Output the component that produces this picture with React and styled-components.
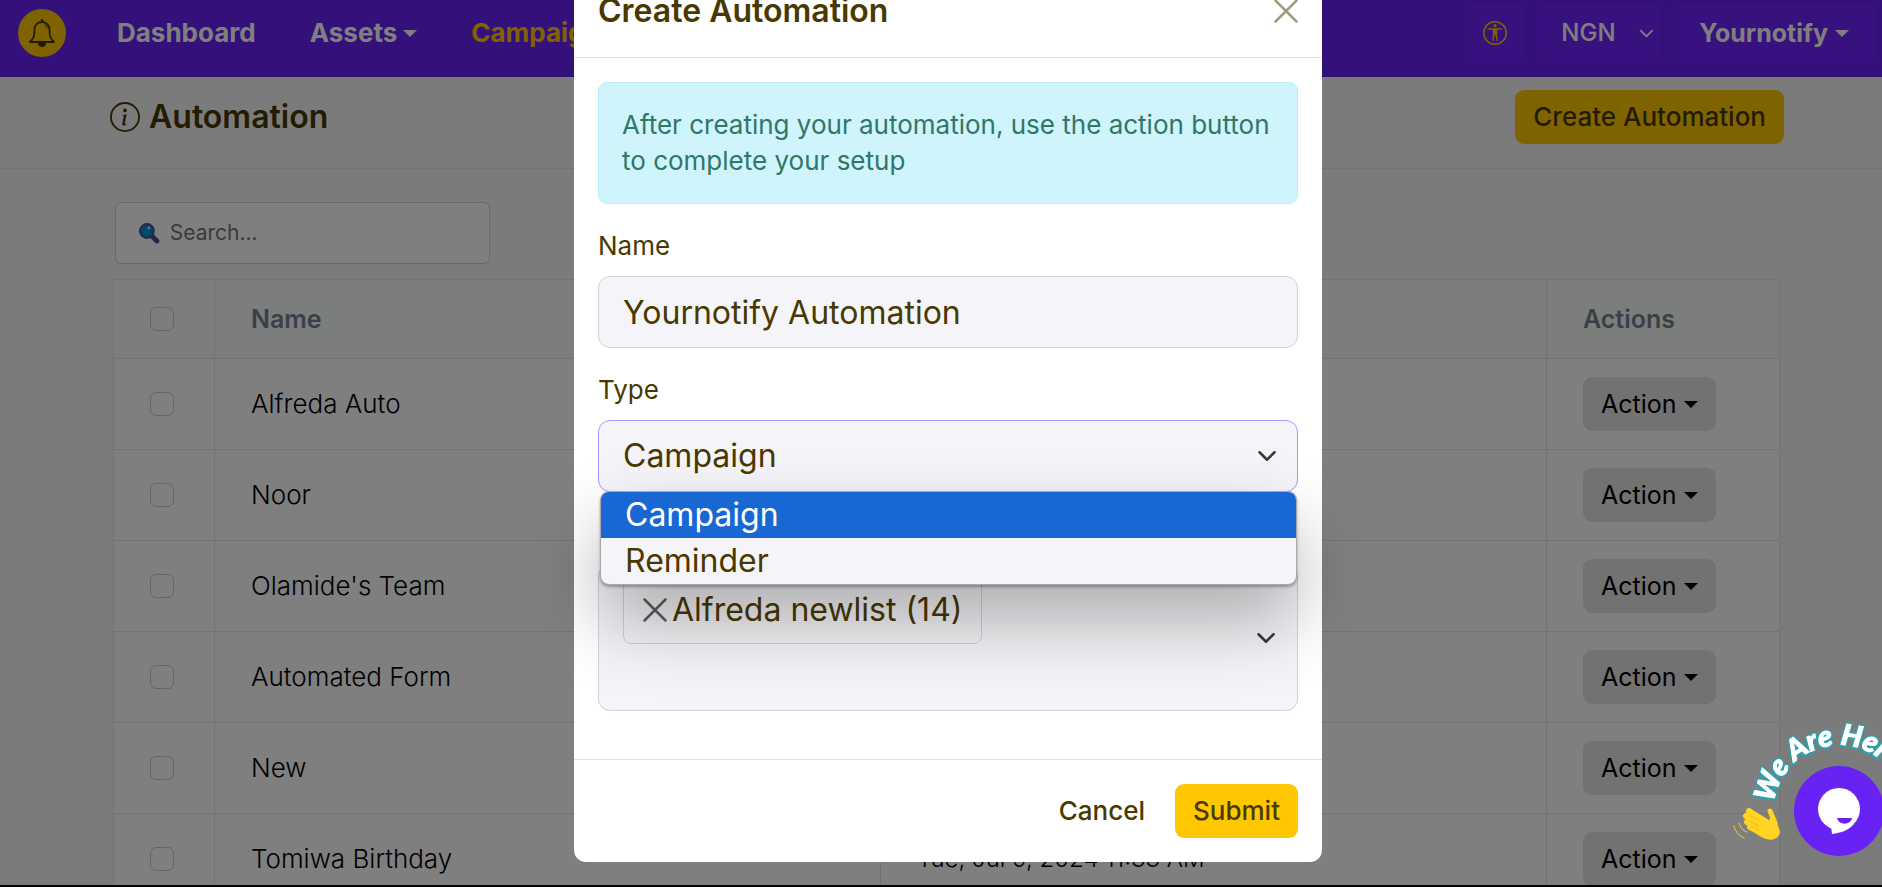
import React, { useState } from 'react';
import styled, { createGlobalStyle, ThemeProvider } from 'styled-components';
import { BsInfoCircle, BsUniversalAccessCircle } from 'react-icons/bs';

const theme = {
  primary: '#6822f4',
  accent: '#ffc700',
  dark: '#493900',
  page: '#f6f6f6',
  field: '#f5f5f9',
  line: '#e6e6e6',
  border: '#cfd1de'
};

const GlobalStyle = createGlobalStyle`
  * {
    box-sizing: border-box;
  }
  body {
    margin: 0;
    font-family: Inter, 'Open Sans', sans-serif;
    font-size: 26px;
    line-height: 36px;
    color: ${props => props.theme.dark};
  }
  button, input, select {
    font: inherit;
    color: inherit;
  }
`;

const Shell = styled.div`
  height: 100vh;
  overflow: hidden;
  background: ${props => props.theme.page};
  border-bottom: 2px solid #000;
`;

const Navbar = styled.header`
  display: flex;
  align-items: center;
  padding: 3px 5px 14px 18px;
  background: ${props => props.theme.primary};
  color: #fff;
`;

const BellButton = styled.button`
  display: flex;
  align-items: center;
  justify-content: center;
  width: 48px;
  height: 48px;
  margin-right: 24px;
  padding: 0;
  border: 0;
  border-radius: 50%;
  background: ${props => props.theme.accent};
  color: ${props => props.theme.dark};
`;

const NavLinks = styled.nav`
  display: flex;
  flex: 1;
`;

const NavLink = styled.a`
  display: flex;
  align-items: center;
  gap: 6px;
  padding: 0 27px;
  font-weight: 700;
  text-decoration: none;
  color: ${props => (props.$active ? props.theme.accent : '#fff')};
`;

const NavTools = styled.div`
  display: flex;
  gap: 12px;
`;

const ToolButton = styled.button`
  display: flex;
  align-items: center;
  justify-content: center;
  gap: 7px;
  height: 60px;
  padding: 0 ${props => (props.$wide ? 28 : 18)}px;
  border: 0;
  border-radius: 9px;
  background: #6e24fd;
  font-size: 25px;
  font-weight: 700;
  color: ${props => (props.$wide ? '#fff' : props.theme.accent)};
`;

const SelectBox = styled.div`
  position: relative;
  display: flex;
  align-items: center;

  > svg {
    position: absolute;
    right: ${props => (props.$small ? 5 : 21)}px;
    color: ${props => (props.$small ? '#fff' : '#343a40')};
    pointer-events: none;
  }
`;

const CurrencySelect = styled.select`
  appearance: none;
  width: 122px;
  height: 60px;
  padding: 0 24px;
  border: 0;
  border-radius: 9px;
  background: #6e24fd;
  font-size: 24px;
  font-weight: 500;
  color: #fff;
`;

const Caret = styled.span`
  border-top: 7px solid currentColor;
  border-left: 7px solid transparent;
  border-right: 7px solid transparent;
`;

const PageHeader = styled.div`
  display: flex;
  align-items: center;
  justify-content: space-between;
  padding: 13px 98px 24px 110px;
  border-bottom: 1px solid ${props => props.theme.line};
`;

const PageTitle = styled.h1`
  display: flex;
  align-items: center;
  gap: 9px;
  margin: 0;
  font-size: 32px;
  font-weight: 600;
`;

const Button = styled.button`
  display: inline-flex;
  align-items: center;
  gap: 7px;
  height: 54px;
  padding: 0 18px;
  border: 0;
  border-radius: 9px;
  font-size: ${props => (props.$muted ? 25 : 26)}px;
  font-weight: ${props => (props.$muted ? 400 : 500)};
  background: ${props => (props.$plain ? 'transparent' : props.$muted ? '#e4e4e4' : props.theme.accent)};
`;

const Content = styled.main`
  padding: 33px 102px 0 113px;
`;

const SearchBox = styled.label`
  display: flex;
  align-items: center;
  gap: 8px;
  width: 375px;
  height: 62px;
  margin: 0 0 15px 2px;
  padding: 0 22px;
  border: 1px solid #d2d2d2;
  border-radius: 6px;
  background: #fff;

  input {
    width: 100%;
    border: 0;
    outline: 0;
    background: transparent;
    font-size: 21px;
  }
  input::placeholder {
    color: #757575;
    opacity: 1;
  }
`;

const Table = styled.table`
  width: 100%;
  table-layout: fixed;
  border-collapse: collapse;
  background: #fff;
  color: #000;

  th, td {
    height: 91px;
    padding: 0 36px;
    border: 1px solid ${props => props.theme.line};
    font-weight: 300;
    text-align: left;
  }
  th {
    height: 79px;
    background: #f8fdfa;
    font-size: 25px;
    font-weight: 600;
    color: #76808c;
  }
  th:first-child, td:first-child {
    width: 101px;
    padding: 0 0 0 36px;
  }
  th:last-child {
    width: 233px;
  }
`;

const DateCell = styled.td`
  font-size: 24px;
`;

const Checkbox = styled.input.attrs({ type: 'checkbox' })`
  display: block;
  appearance: none;
  width: 24px;
  height: 24px;
  margin: 0;
  border: 1px solid #cdcabf;
  border-radius: 6px;
`;

const Overlay = styled.div`
  position: fixed;
  inset: 0;
  display: flex;
  align-items: flex-end;
  justify-content: center;
  padding: 0 0 25px 14px;
  overflow: hidden;
  background: rgba(0, 0, 0, 0.5);
`;

const Dialog = styled.form`
  width: 100%;
  max-width: 748px;
  border-radius: 12px;
  background: #fff;
`;

const DialogHeader = styled.div`
  display: flex;
  align-items: center;
  justify-content: space-between;
  padding: 24px;
  border-bottom: 1px solid #dee2e6;

  h2 {
    margin: 0;
    font-size: 32px;
    font-weight: 600;
    line-height: 45px;
  }
`;

const CloseButton = styled.button`
  display: flex;
  padding: 0;
  border: 0;
  background: transparent;
  opacity: 0.5;
`;

const DialogBody = styled.div`
  display: flex;
  flex-direction: column;
  gap: 24px;
  padding: 24px 24px 48px;
`;

const Notice = styled.p`
  min-height: 122px;
  margin: 0;
  padding: 24px 23px;
  border: 1px solid #b6effb;
  border-radius: 9px;
  background: #cff4fc;
  color: #2f7767;
`;

const Field = styled.div`
  position: relative;
  display: flex;
  flex-direction: column;
  gap: 12px;
`;

const TextInput = styled.input`
  width: 100%;
  height: 72px;
  padding: 0 24px;
  border: 1px solid ${props => props.theme.border};
  border-radius: 12px;
  outline: 0;
  background: ${props => props.theme.field};
  font-size: 32px;
`;

const TypeSelect = styled(TextInput).attrs({ as: 'select' })`
  appearance: none;
  border-color: #b391fa;
`;

const OptionMenu = styled.ul`
  position: absolute;
  top: calc(100% - 1px);
  left: 2px;
  right: 1px;
  z-index: 2;
  margin: 0;
  padding: 0;
  overflow: hidden;
  list-style: none;
  border: 1px solid #a9a9ad;
  border-radius: 9px;
  background: ${props => props.theme.field};
  box-shadow: 0 2px 3px rgba(0, 0, 0, 0.3), 0 36px 72px rgba(0, 0, 0, 0.3);
`;

const Option = styled.li`
  padding: 0 24px;
  font-size: 32px;
  line-height: 46px;
  background: ${props => (props.$selected ? '#1967d2' : 'transparent')};
  color: ${props => (props.$selected ? '#fff' : 'inherit')};
`;

const TagPicker = styled(SelectBox)`
  align-items: flex-start;
  height: 147px;
  margin-top: 48px;
  padding: 11px 24px;
  border: 1px solid ${props => props.theme.border};
  border-radius: 12px;
  background: ${props => props.theme.field};

  > svg {
    top: 63px;
  }
`;

const Tag = styled.span`
  display: flex;
  align-items: center;
  gap: 5px;
  height: 68px;
  padding: 0 19px;
  border: 1px solid ${props => props.theme.border};
  border-radius: 8px;
  font-size: 32px;

  button {
    opacity: 0.7;
    color: #222;
  }
`;

const DialogFooter = styled.div`
  display: flex;
  justify-content: flex-end;
  gap: 12px;
  padding: 24px;
  border-top: 1px solid #dee2e6;
`;

const ChatButton = styled.button`
  position: fixed;
  right: 0;
  bottom: 17px;
  padding: 0;
  border: 0;
  background: transparent;

  svg {
    display: block;
  }
  text {
    font-family: Lato, sans-serif;
    font-size: 29px;
    font-style: italic;
    font-weight: 900;
    fill: #fff;
    stroke: #fff;
    stroke-width: 1px;
    filter: drop-shadow(1px 0 0 #2f9fab) drop-shadow(-1px 0 0 #2f9fab) drop-shadow(0 -1px 0 #2f9fab) drop-shadow(0 2px 0 #2f9fab);
  }
`;

const automations = [
  { name: 'Alfreda Auto', created: 'Tue, Jul 9, 2024 11:33 AM' },
  { name: 'Noor', created: 'Tue, Jul 9, 2024 11:33 AM' },
  { name: "Olamide's Team", created: 'Tue, Jul 9, 2024 11:33 AM' },
  { name: 'Automated Form', created: 'Tue, Jul 9, 2024 11:33 AM' },
  { name: 'New', created: 'Tue, Jul 9, 2024 11:33 AM' },
  { name: 'Tomiwa Birthday', created: 'Tue, Jul 9, 2024 11:33 AM' }
];

const BellIcon = () => (
  <svg width="28" height="30" viewBox="0 0 28 30" fill="none" stroke="currentColor" aria-hidden="true">
    <path d="M14 4c-5 0-7.500 3.500-7.500 8 0 6-.5 8-4.500 12h24c-4-4-4.500-6-4.500-12 0-4.500-2.500-8-7.500-8z" strokeWidth="1.800" strokeLinejoin="round" />
    <path d="M16.500 6.500c1.500.5 2.500 2 2.500 4" strokeWidth="1" />
    <circle cx="14" cy="2.500" r="1.500" fill="currentColor" stroke="none" />
    <path d="M10 25h8a4 4 0 0 1-8 0z" fill="currentColor" stroke="none" />
  </svg>
);

const ChevronIcon = ({ size }) => (
  <svg width={size} height={size} viewBox="0 0 16 16" fill="none" stroke="currentColor" strokeWidth="2" strokeLinecap="round" strokeLinejoin="round" aria-hidden="true">
    <path d="M2 5l6 6 6-6" />
  </svg>
);

const CloseIcon = () => (
  <svg width="24" height="24" viewBox="0 0 24 24" stroke="currentColor" strokeWidth="2.500" strokeLinecap="round" aria-hidden="true">
    <path d="M1.500 1.500l21 21M22.500 1.500l-21 21" />
  </svg>
);

const SearchIcon = () => (
  <svg width="24" height="24" viewBox="0 0 22 22" aria-hidden="true">
    <path d="M14 14l5 5" stroke="#5b4a8c" strokeWidth="5" strokeLinecap="round" />
    <circle cx="9" cy="9" r="7" fill="#0090d8" stroke="#4a4c94" strokeWidth="2" />
    <circle cx="11" cy="6" r="1.500" fill="#b8e8ff" />
  </svg>
);

const ChatIcon = () => (
  <svg width="152" height="165" viewBox="0 0 152 165" aria-hidden="true">
    <defs>
      <path id="arc" d="M44 98 A66 66 0 0 1 175 98" />
    </defs>
    <text>
      <textPath href="#arc">We Are Here!</textPath>
    </text>
    <circle cx="109" cy="106" r="45" fill="#6822f4" />
    <circle cx="109" cy="104" r="21" fill="#fff" />
    <path d="M101 121l1 8c9-1 17-4 22-10z" fill="#fff" />
    <path d="M107 113h15c-1 7-13 8-15 0z" fill="#6822f4" />
    <g stroke="#ffd422" fill="none" strokeLinecap="round">
      <path d="M19 106l19 12M16 111l20 11M17 117l19 10M20 122l16 8" strokeWidth="6" />
      <path d="M40 106l5 12" strokeWidth="5" />
      <path d="M4 121c1 5 5 10 10 12M9 118c1 4 4 8 8 9" strokeWidth="1" />
    </g>
    <path d="M24 112l14 5 4-7c4 6 8 13 8 18-2 6-8 8-14 6-6-2-11-6-16-10z" fill="#ffd422" />
    <path d="M19 110l11 6M19 116l10 5M21 121l8 4" stroke="#f5b81e" fill="none" />
  </svg>
);

function App() {
  const [type, setType] = useState('Campaign');
  const [name, setName] = useState('Yournotify Automation');

  return (
    <ThemeProvider theme={theme}>
      <GlobalStyle />
      <Shell>
        <Navbar>
          <BellButton aria-label="Notifications"><BellIcon /></BellButton>
          <NavLinks>
            <NavLink href="#">Dashboard</NavLink>
            <NavLink href="#">Assets <Caret /></NavLink>
            <NavLink href="#" $active>Campaigns <Caret /></NavLink>
          </NavLinks>
          <NavTools>
            <ToolButton aria-label="Accessibility"><BsUniversalAccessCircle size={24} /></ToolButton>
            <SelectBox $small>
              <CurrencySelect aria-label="Currency">
                <option>NGN</option>
              </CurrencySelect>
              <ChevronIcon size={15} />
            </SelectBox>
            <ToolButton $wide>Yournotify <Caret /></ToolButton>
          </NavTools>
        </Navbar>

        <PageHeader>
          <PageTitle><BsInfoCircle size={30} /> Automation</PageTitle>
          <Button>Create Automation</Button>
        </PageHeader>

        <Content>
          <SearchBox>
            <SearchIcon />
            <input type="search" placeholder="Search..." aria-label="Search" />
          </SearchBox>
          <Table>
            <thead>
              <tr>
                <th><Checkbox aria-label="Select all" /></th>
                <th>Name</th>
                <th>Created</th>
                <th>Actions</th>
              </tr>
            </thead>
            <tbody>
              {automations.map(item => (
                <tr key={item.name}>
                  <td><Checkbox aria-label={item.name} /></td>
                  <td>{item.name}</td>
                  <DateCell>{item.created}</DateCell>
                  <td><Button $muted>Action <Caret /></Button></td>
                </tr>
              ))}
            </tbody>
          </Table>
        </Content>
      </Shell>

      <Overlay>
        <Dialog onSubmit={e => e.preventDefault()}>
          <DialogHeader>
            <h2>Create Automation</h2>
            <CloseButton type="button" aria-label="Close"><CloseIcon /></CloseButton>
          </DialogHeader>
          <DialogBody>
            <Notice>After creating your automation, use the action button to complete your setup</Notice>
            <Field>
              <label htmlFor="name">Name</label>
              <TextInput id="name" value={name} onChange={e => setName(e.target.value)} />
            </Field>
            <Field>
              <label htmlFor="type">Type</label>
              <SelectBox>
                <TypeSelect id="type" value={type} onChange={e => setType(e.target.value)}>
                  <option>Campaign</option>
                  <option>Reminder</option>
                </TypeSelect>
                <ChevronIcon size={20} />
              </SelectBox>
              <OptionMenu>
                <Option $selected>Campaign</Option>
                <Option>Reminder</Option>
              </OptionMenu>
            </Field>
            <TagPicker role="group" aria-label="Lists">
              <Tag>
                <CloseButton type="button" aria-label="Remove"><CloseIcon /></CloseButton>
                Alfreda newlist (14)
              </Tag>
              <ChevronIcon size={20} />
            </TagPicker>
          </DialogBody>
          <DialogFooter>
            <Button type="button" $plain>Cancel</Button>
            <Button type="submit">Submit</Button>
          </DialogFooter>
        </Dialog>
      </Overlay>

      <ChatButton aria-label="Open chat"><ChatIcon /></ChatButton>
    </ThemeProvider>
  );
}

export default App;
